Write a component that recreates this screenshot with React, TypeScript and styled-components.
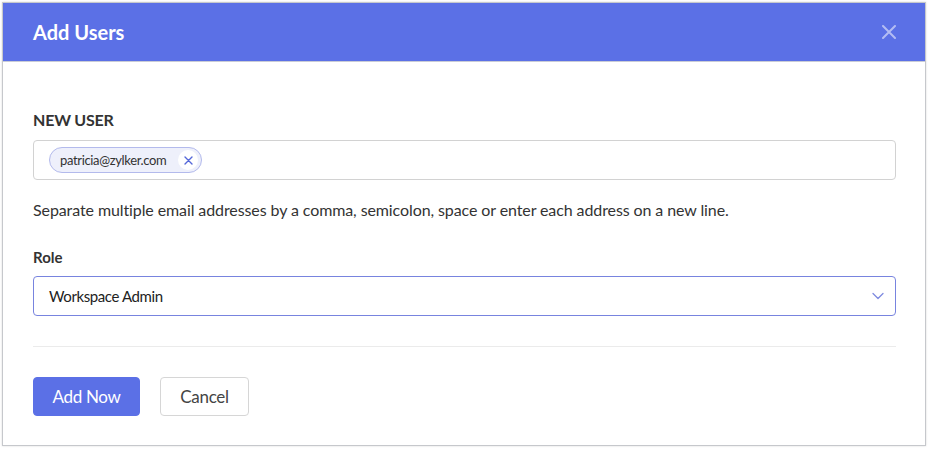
import React from "react"
import styled, { createGlobalStyle } from "styled-components"

const GlobalStyle = createGlobalStyle`
    html, body {
        margin: 0;
        padding: 0;
        background: #fff;
        font-family: Lato, "Open Sans", sans-serif;
    }
    #root {
        padding: 2px;
    }
`

const App = () => {
    return (
        <>
            <GlobalStyle />
            <SDialog>
                <SHeader>
                    <STitle>Add Users</STitle>
                    <SClose aria-label="close">
                        <svg width="14" height="14" viewBox="0 0 14 14">
                            <path d="M1 1 L13 13 M13 1 L1 13" stroke="#b3bcf3" strokeWidth="2" strokeLinecap="round" />
                        </svg>
                    </SClose>
                </SHeader>

                <SBody>
                    <SSectionLabel>NEW USER</SSectionLabel>
                    <SEmailBox>
                        <SChip>
                            patricia@zylker.com
                            <SChipRemove>
                                <svg width="9" height="9" viewBox="0 0 9 9">
                                    <path d="M1 1 L8 8 M8 1 L1 8" stroke="#5568d9" strokeWidth="1.4" strokeLinecap="round" />
                                </svg>
                            </SChipRemove>
                        </SChip>
                    </SEmailBox>
                    <SHelp>
                        Separate multiple email addresses by a comma, semicolon, space or enter each address on a new line.
                    </SHelp>

                    <SFieldLabel>Role</SFieldLabel>
                    <SSelect>
                        <span>Workspace Admin</span>
                        <svg width="12" height="8" viewBox="0 0 12 8">
                            <path d="M1 1.5 L6 6.5 L11 1.5" stroke="#7f8be0" strokeWidth="1.3" fill="none" strokeLinecap="round" strokeLinejoin="round" />
                        </svg>
                    </SSelect>

                    <SDivider />

                    <SActions>
                        <SButton $primary $width={107}>Add Now</SButton>
                        <SButton $width={89}>Cancel</SButton>
                    </SActions>
                </SBody>
            </SDialog>
        </>
    )
}

export default App

const SDialog = styled.div`
    width: 922px;
    height: 442px;
    border: 1px solid #c6c8cc;
    box-shadow: 0 0 2px rgba(0, 0, 0, 0.15);
    background: #fff;
    display: flex;
    flex-direction: column;
    box-sizing: content-box;
`

const SHeader = styled.div`
    height: 58px;
    background: #5b70e6;
    display: flex;
    align-items: center;
    justify-content: space-between;
    padding: 0 29px 0 30px;
    border-bottom: 1px solid #c9ccd6;
`

const STitle = styled.div`
    color: #fff;
    font-size: 20px;
    font-weight: 700;
`

const SClose = styled.div`
    display: flex;
    align-items: center;
    cursor: pointer;
`

const SBody = styled.div`
    padding: 48px 29px 0 30px;
    display: flex;
    flex-direction: column;
`

const SSectionLabel = styled.div`
    font-size: 16px;
    font-weight: 700;
    color: #333;
    line-height: 20px;
    letter-spacing: -0.2px;
`

const SEmailBox = styled.div`
    margin-top: 10px;
    height: 40px;
    box-sizing: border-box;
    border: 1px solid #d2d2d2;
    border-radius: 4px;
    display: flex;
    align-items: center;
    padding: 0 15px;
`

const SChip = styled.div`
    display: flex;
    align-items: center;
    gap: 12px;
    height: 26px;
    box-sizing: border-box;
    padding: 0 3px 0 10px;
    background: #eef0fb;
    border: 1px solid #b3baec;
    border-radius: 13px;
    font-size: 13px;
    letter-spacing: -0.35px;
    color: #333;
`

const SChipRemove = styled.span`
    width: 20px;
    height: 20px;
    border-radius: 50%;
    background: #fff;
    display: flex;
    align-items: center;
    justify-content: center;
`

const SHelp = styled.div`
    margin-top: 20px;
    font-size: 16px;
    color: #333;
    line-height: 20px;
    letter-spacing: -0.1px;
`

const SFieldLabel = styled.div`
    margin-top: 27px;
    font-size: 15px;
    font-weight: 700;
    color: #333;
    line-height: 20px;
`

const SSelect = styled.div`
    margin-top: 9px;
    height: 40px;
    box-sizing: border-box;
    border: 1px solid #7884df;
    border-radius: 4px;
    display: flex;
    align-items: center;
    justify-content: space-between;
    padding: 0 11px 0 15px;
    font-size: 15px;
    letter-spacing: -0.4px;
    color: #222;
`

const SDivider = styled.div`
    margin-top: 30px;
    height: 1px;
    background: #ebebeb;
`

const SActions = styled.div`
    margin-top: 30px;
    display: flex;
    gap: 20px;
`

const SButton = styled.div<{ $primary?: boolean; $width: number }>`
    width: ${(p) => p.$width}px;
    height: 39px;
    box-sizing: border-box;
    border-radius: 4px;
    display: flex;
    align-items: center;
    justify-content: center;
    font-size: 17px;
    letter-spacing: -0.3px;
    cursor: pointer;
    background: ${(p) => (p.$primary ? "#5b70e6" : "#fff")};
    color: ${(p) => (p.$primary ? "#fff" : "#444")};
    border: 1px solid ${(p) => (p.$primary ? "#5b70e6" : "#d6d6d6")};
`
